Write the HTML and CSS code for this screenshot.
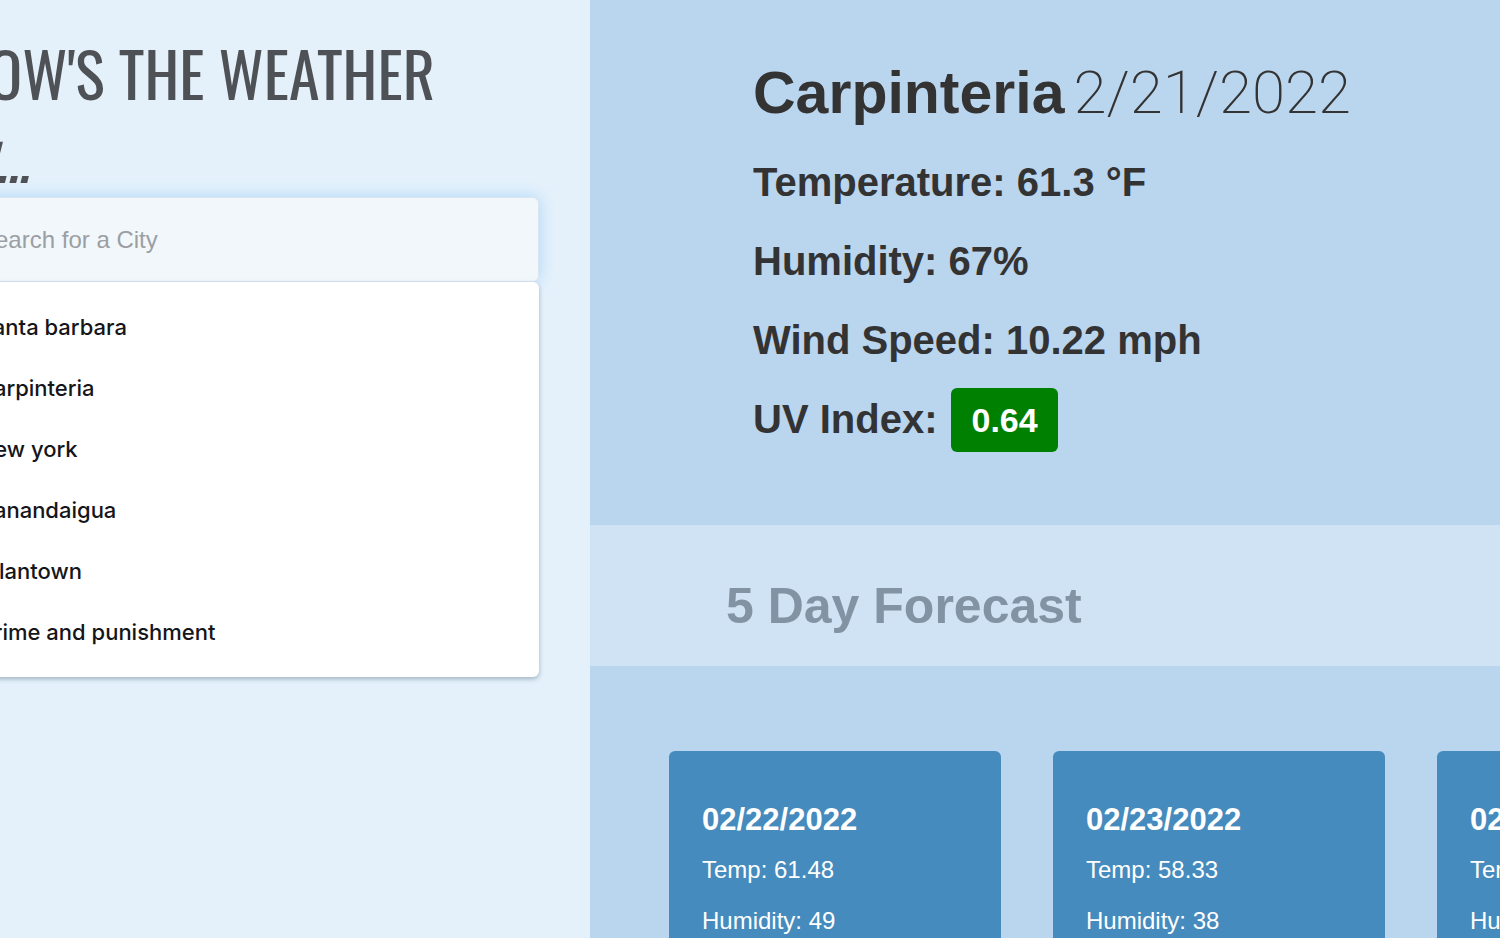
FILE: index.html
```html
<!DOCTYPE html>
<html lang="en">
<head>
<meta charset="utf-8">
<meta name="viewport" content="width=device-width, initial-scale=1">
<title>How's the Weather In...</title>
<link rel="stylesheet" href="styles.css">
</head>
<body>
<div class="app">
  <aside class="sidebar">
    <h1 class="title">HOW'S THE WEATHER <em class="title-tail">IN...</em></h1>
    <input class="search" type="text" aria-label="Search for a City" placeholder="Search for a City">
    <ul class="suggestions" role="listbox" aria-label="Recent searches">
      <li class="suggestion" role="option">santa barbara</li>
      <li class="suggestion" role="option">carpinteria</li>
      <li class="suggestion" role="option">new york</li>
      <li class="suggestion" role="option">canandaigua</li>
      <li class="suggestion" role="option">allantown</li>
      <li class="suggestion" role="option">crime and punishment</li>
    </ul>
  </aside>
  <main class="main">
    <section class="current">
      <h2 class="city">Carpinteria <span class="date">2/21/2022</span></h2>
      <p class="reading">Temperature: 61.3 °F</p>
      <p class="reading">Humidity: 67%</p>
      <p class="reading">Wind Speed: 10.22 mph</p>
      <p class="reading">UV Index: <span class="uv">0.64</span></p>
    </section>
    <h2 class="band">5 Day Forecast</h2>
    <section class="cards">
      <article class="card">
        <h3 class="card-date">02/22/2022</h3>
        <p class="card-line">Temp: 61.48</p>
        <p class="card-line">Humidity: 49</p>
      </article>
      <article class="card">
        <h3 class="card-date">02/23/2022</h3>
        <p class="card-line">Temp: 58.33</p>
        <p class="card-line">Humidity: 38</p>
      </article>
      <article class="card">
        <h3 class="card-date">02/24/2022</h3>
        <p class="card-line">Temp: 58.33</p>
        <p class="card-line">Humidity: 38</p>
      </article>
    </section>
  </main>
</div>
</body>
</html>
```
FILE: styles.css
```css
* {
  box-sizing: border-box;
  margin: 0;
  padding: 0;
}

body {
  font-family: "Liberation Sans", Arial, sans-serif;
  color: #333;
  background: #e4f1fb;
}

.app {
  display: flex;
  height: 100vh;
  overflow: hidden;
  margin-left: -48px;
}

.sidebar {
  flex: 0 0 638px;
  padding: 28px 51px 0 0;
  background: #e4f1fb;
}

.title {
  margin-bottom: -7px;
  padding-left: 2px;
  font-family: Oswald, "Roboto Condensed", sans-serif;
  font-size: 62px;
  line-height: 89px;
  font-weight: 400;
  color: #4e5256;
}

.title-tail {
  display: block;
  font-size: 51px;
  line-height: 87px;
  font-weight: 500;
}

.search {
  display: block;
  width: 100%;
  height: 85px;
  padding: 0 26px;
  border: 1px solid #d9e6f1;
  border-radius: 6px;
  background: #f2f7fc;
  box-shadow: 0 0 16px #acd5f8;
  font-family: inherit;
  font-size: 24px;
  color: #333;
}

.search::placeholder {
  color: #9b9fa3;
  opacity: 1;
}

.suggestions {
  list-style: none;
  padding: 15px 29px 14px;
  border-radius: 6px;
  background: #fff;
  box-shadow: 0 2px 5px #9fb2c2;
  position: relative;
}

.suggestion {
  font-family: Inter, sans-serif;
  font-size: 22px;
  font-weight: 500;
  line-height: 61px;
  color: #15151a;
}

.main {
  flex: 1;
  min-width: 0;
  overflow: hidden;
  background: #bad5ee;
}

.current {
  padding: 57px 40px 66px 163px;
}

.city {
  display: flex;
  align-items: baseline;
  gap: 9px;
  margin-bottom: 14px;
  font-size: 59px;
  line-height: 72px;
}

.date {
  font-family: Roboto, sans-serif;
  font-size: 60px;
  font-weight: 200;
}

.reading {
  display: flex;
  align-items: center;
  gap: 14px;
  height: 79px;
  font-size: 40px;
  font-weight: 700;
}

.uv {
  padding: 0 20px;
  border-radius: 6px;
  background: #008000;
  color: #fff;
  font-size: 34px;
  line-height: 64px;
}

.band {
  padding: 51px 136px 30px;
  background: #d0e3f5;
  color: #8294a4;
  font-size: 50px;
  line-height: 60px;
}

.cards {
  display: flex;
  gap: 52px;
  padding: 85px 79px;
}

.card {
  flex: 0 0 332px;
  padding: 49px 33px;
  border-radius: 6px;
  background: #468bbd;
  color: #fff;
}

.card-date {
  font-size: 31px;
  line-height: 40px;
  margin-bottom: 4px;
}

.card-line {
  font-size: 24px;
  line-height: 51px;
}
```
